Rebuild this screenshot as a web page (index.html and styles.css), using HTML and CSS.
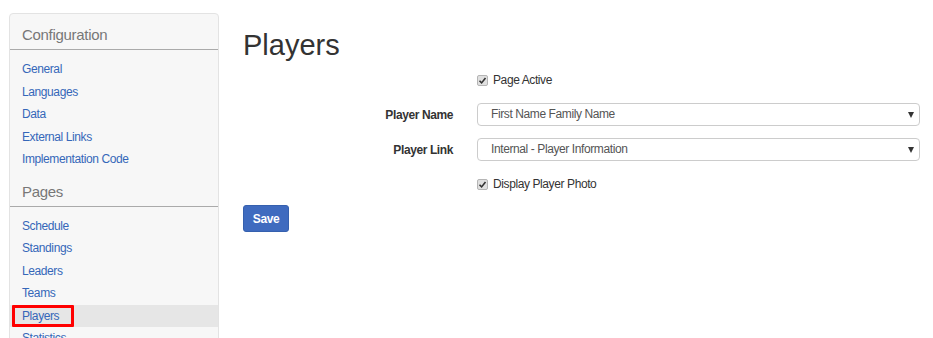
FILE: index.html
```html
<!DOCTYPE html>
<html>
<head>
  <title>Players</title>
  <link rel="stylesheet" href="styles.css">
</head>
<body>
  <div class="page">
    <div class="sidebar">
      <h4 class="side-title">Configuration</h4>
      <ul class="side-list">
        <li><a href="#">General</a></li>
        <li><a href="#">Languages</a></li>
        <li><a href="#">Data</a></li>
        <li><a href="#">External Links</a></li>
        <li><a href="#">Implementation Code</a></li>
      </ul>
      <h4 class="side-title">Pages</h4>
      <ul class="side-list">
        <li><a href="#">Schedule</a></li>
        <li><a href="#">Standings</a></li>
        <li><a href="#">Leaders</a></li>
        <li><a href="#">Teams</a></li>
        <li class="active"><a href="#">Players</a><span class="marker"></span></li>
        <li><a href="#">Statistics</a></li>
      </ul>
    </div>

    <div class="main">
      <h1>Players</h1>
      <div class="form">
        <div class="row">
          <div class="label"></div>
          <div class="control check-row">
            <span class="check"><svg width="9" height="9" viewBox="0 0 9 9"><path d="M1.5 4.8 L3.6 6.9 L7.5 2" fill="none" stroke="#333" stroke-width="1.6"/></svg></span>
            <span>Page Active</span>
          </div>
        </div>
        <div class="row">
          <div class="label">Player Name</div>
          <div class="control">
            <div class="select">First Name Family Name<span class="caret"></span></div>
          </div>
        </div>
        <div class="row">
          <div class="label">Player Link</div>
          <div class="control">
            <div class="select">Internal - Player Information<span class="caret"></span></div>
          </div>
        </div>
        <div class="row">
          <div class="label"></div>
          <div class="control check-row">
            <span class="check"><svg width="9" height="9" viewBox="0 0 9 9"><path d="M1.5 4.8 L3.6 6.9 L7.5 2" fill="none" stroke="#333" stroke-width="1.6"/></svg></span>
            <span>Display Player Photo</span>
          </div>
        </div>
      </div>
      <button class="save">Save</button>
    </div>
  </div>
</body>
</html>
```

FILE: styles.css
```css
body {
  margin: 0;
  font-family: "Liberation Sans", Arial, sans-serif;
  font-size: 12px;
  letter-spacing: -0.4px;
  color: #333;
  background: #fff;
  overflow: hidden;
  height: 338px;
}
.page {
  display: flex;
  padding: 13px 13px 0 9px;
  gap: 24px;
}
.sidebar {
  width: 208px;
  height: 360px;
  flex-shrink: 0;
  background: #f7f7f7;
  border: 1px solid #e3e3e3;
  border-radius: 4px;
}
.side-title {
  margin: 0;
  padding: 11px 12px 4px;
  font-size: 15px;
  font-weight: normal;
  letter-spacing: -0.3px;
  line-height: 20px;
  color: #777;
  border-bottom: 1px solid #aaa;
}
.side-list {
  list-style: none;
  margin: 0;
  padding: 8px 0 0;
}
.side-list li {
  position: relative;
  padding: 3px 12px;
  line-height: 16.5px;
}
.side-list a {
  color: #3567b9;
  text-decoration: none;
}
.side-list li.active {
  background: #e6e6e6;
}
.marker {
  position: absolute;
  left: 2px;
  top: 0;
  width: 56px;
  height: 16px;
  border: 3px solid #f00;
  border-radius: 1px;
}
.main {
  flex: 1;
}
h1 {
  margin: 16px 0 8px;
  font-size: 29px;
  font-weight: normal;
  letter-spacing: 0;
  line-height: 32px;
  color: #333;
}
.form {
  display: flex;
  flex-direction: column;
  gap: 12px;
}
.row {
  display: grid;
  grid-template-columns: 210px 1fr;
  column-gap: 24px;
  align-items: center;
  min-height: 22px;
}
.label {
  text-align: right;
  font-weight: bold;
}
.check-row {
  display: flex;
  align-items: center;
  gap: 5px;
}
.check {
  display: inline-flex;
  align-items: center;
  justify-content: center;
  width: 9px;
  height: 9px;
  background: #e0e0e0;
  border: 1px solid #b5b5b5;
  border-radius: 2px;
}
.select {
  position: relative;
  height: 21px;
  line-height: 21px;
  padding-left: 13px;
  border: 1px solid #ccc;
  border-radius: 4px;
  color: #555;
}
.caret {
  position: absolute;
  right: 5px;
  top: 8px;
  border-left: 3px solid transparent;
  border-right: 3px solid transparent;
  border-top: 6px solid #333;
}
.save {
  margin-top: 10px;
  width: 46px;
  height: 27px;
  padding: 0;
  font-family: inherit;
  font-size: 12px;
  font-weight: bold;
  letter-spacing: -0.4px;
  color: #fff;
  background: #3f6bbf;
  border: 1px solid #3560ae;
  border-radius: 3px;
}
```
